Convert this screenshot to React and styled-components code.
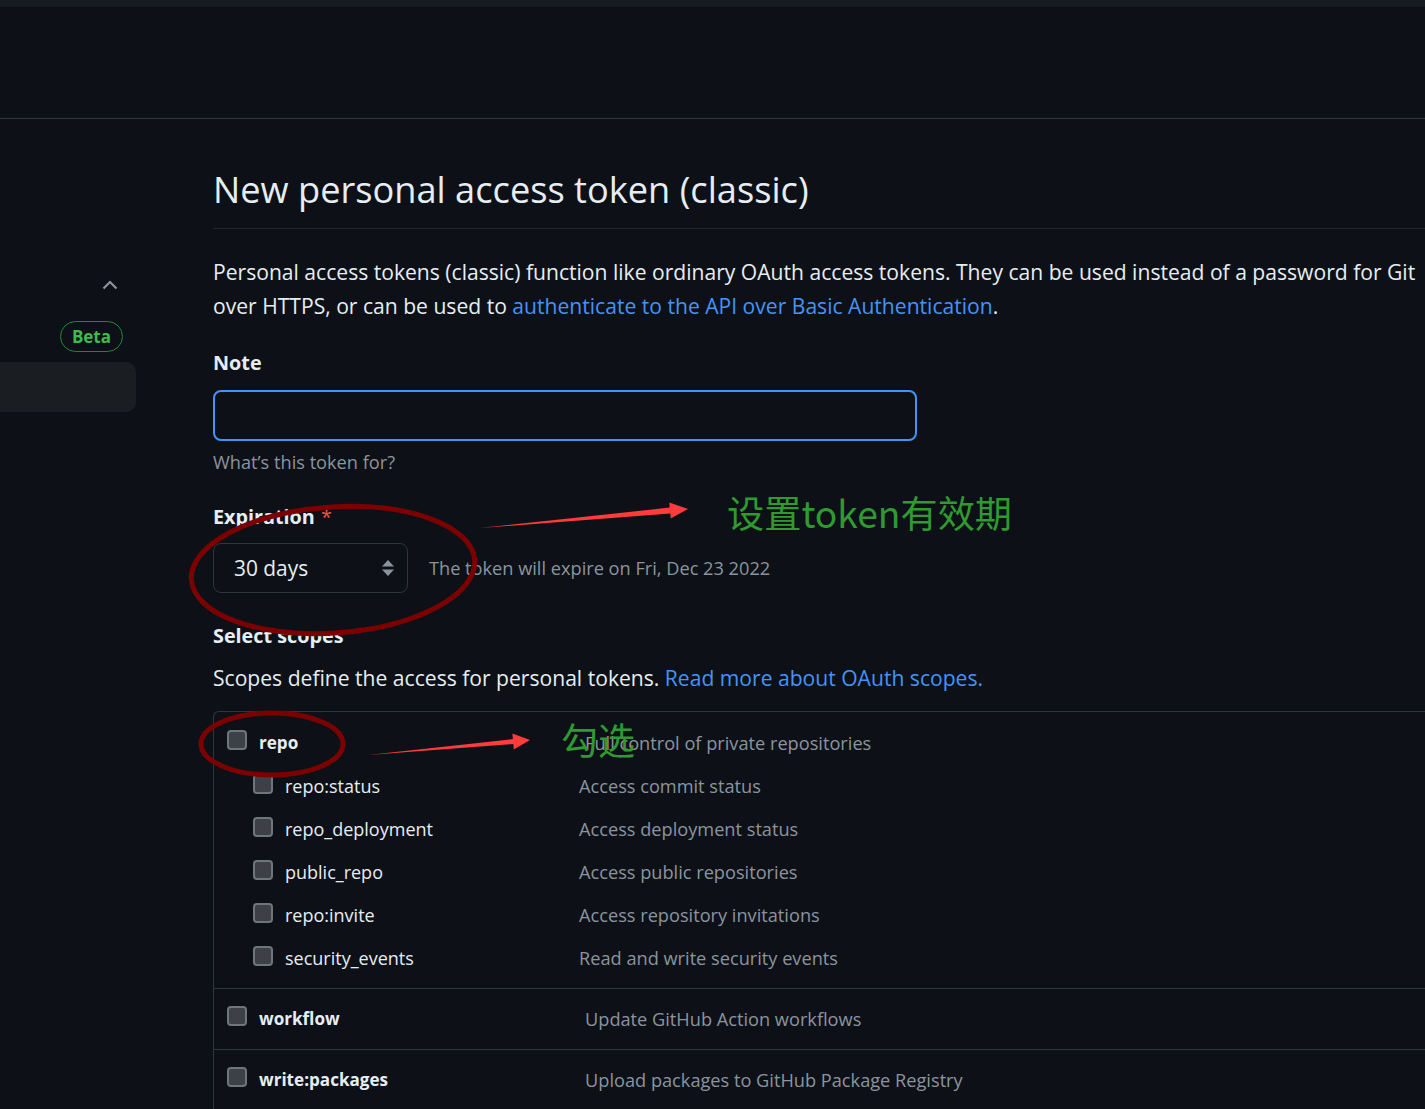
import React from 'react'
import styled, { createGlobalStyle } from 'styled-components'

const GlobalStyle = createGlobalStyle`
  html, body {
    margin: 0;
    padding: 0;
    background: #0d1117;
    overflow: hidden;
  }
  body {
    font-family: "Open Sans", "Noto Sans", "Noto Sans CJK SC", sans-serif;
    color: #e6edf3;
  }
`

const Page = styled.div`
  position: relative;
  width: 1425px;
  height: 1109px;
  overflow: hidden;
  background: #0d1117;
`

const TopStrip = styled.div`
  height: 7px;
  background: #161b22;
`

const HeaderBand = styled.div`
  height: 111px;
  border-bottom: 1px solid #30363d;
`

const Layout = styled.div`
  display: grid;
  grid-template-columns: 136px 1300px;
  column-gap: 77px;
`

const Sidebar = styled.aside`
  display: flex;
  flex-direction: column;
  align-items: flex-end;
  padding-top: 160px;
`

const Chevron = styled.svg`
  margin-right: 18px;
  width: 16px;
  height: 12px;
`

const BetaBadge = styled.span`
  margin-top: 30px;
  margin-right: 13px;
  box-sizing: border-box;
  height: 31px;
  padding: 0 11px;
  border: 1px solid #238636;
  border-radius: 16px;
  color: #3fb950;
  font-size: 17px;
  font-weight: 700;
  line-height: 29px;
`

const NavItem = styled.div`
  margin-top: 10px;
  width: 136px;
  height: 50px;
  background: #1a1e23;
  border-radius: 0 10px 10px 0;
`

const Content = styled.main`
  padding-top: 43px;
`

const Title = styled.h1`
  margin: 0;
  padding-bottom: 12px;
  border-bottom: 1px solid #21262d;
  font-size: 36.2px;
  font-weight: 400;
  line-height: 54px;
  color: #e6edf3;
`

const Lead = styled.p`
  margin: 26px 0 0;
  font-size: 21.1px;
  line-height: 34px;
  color: #e6edf3;
  white-space: nowrap;
`

const Link = styled.a`
  color: #4493f8;
  text-decoration: none;
`

const Label = styled.div`
  margin-top: ${(p) => p.$top}px;
  font-size: 19.8px;
  font-weight: 700;
  line-height: 30px;
  color: #e6edf3;
`

const Required = styled.span`
  color: #f85149;
  font-weight: 400;
  margin-left: 6px;
`

const NoteInput = styled.input`
  display: block;
  box-sizing: border-box;
  margin-top: 12px;
  width: 704px;
  height: 51px;
  background: #0d1117;
  border: 2px solid #4493f8;
  border-radius: 8px;
  outline: none;
`

const Hint = styled.div`
  margin-top: 8px;
  font-size: 18.2px;
  line-height: 26px;
  color: #8b949e;
`

const ExpiryRow = styled.div`
  display: flex;
  align-items: center;
  gap: 21px;
  margin-top: 11px;
`

const SelectBox = styled.div`
  box-sizing: border-box;
  display: flex;
  align-items: center;
  justify-content: space-between;
  width: 195px;
  height: 50px;
  padding: 0 12px 0 20px;
  background: #0d1117;
  border: 1px solid #30363d;
  border-radius: 8px;
  font-size: 20.9px;
  color: #e6edf3;
`

const ExpiryNote = styled.span`
  font-size: 18.2px;
  color: #8b949e;
`

const Description = styled.p`
  margin: 12px 0 0;
  font-size: 21.1px;
  line-height: 30px;
  color: #e6edf3;
`

const ScopeTable = styled.div`
  margin-top: 18px;
  border-top: 1px solid #30363d;
  border-left: 1px solid #30363d;
  border-top-left-radius: 6px;
`

const ScopeGroup = styled.div`
  padding: ${(p) => (p.$first ? '9px' : '8px')} 0 9px;
  border-top: ${(p) => (p.$first ? 'none' : '1px solid #30363d')};
`

const ScopeRow = styled.div`
  display: flex;
  align-items: center;
  height: 43px;
  padding-left: ${(p) => (p.$sub ? 39 : 13)}px;
`

const Check = styled.span`
  flex: none;
  box-sizing: border-box;
  width: 20px;
  height: 20px;
  margin-top: ${(p) => (p.$sub ? -4 : -6)}px;
  background: #3d4046;
  border: 2px solid #70757c;
  border-radius: 4px;
`

const ScopeName = styled.span`
  flex: none;
  width: ${(p) => p.$width}px;
  margin-left: 12px;
  font-size: ${(p) => (p.$bold ? 17.1 : 18)}px;
  font-weight: ${(p) => (p.$bold ? 700 : 400)};
  color: #e6edf3;
`

const ScopeDesc = styled.span`
  font-size: 18.2px;
  color: #8b949e;
`

const Overlay = styled.svg`
  position: absolute;
  left: 0;
  top: 0;
  pointer-events: none;
`

const Callout = styled.span`
  position: absolute;
  left: ${(p) => p.$x}px;
  top: ${(p) => p.$y}px;
  font-family: "Noto Sans CJK SC", "Noto Sans", sans-serif;
  font-size: ${(p) => p.$size}px;
  line-height: 1;
  color: #2f9a30;
  white-space: nowrap;
`

const scopes = [
  {
    name: 'repo',
    desc: 'Full control of private repositories',
    children: [
      ['repo:status', 'Access commit status'],
      ['repo_deployment', 'Access deployment status'],
      ['public_repo', 'Access public repositories'],
      ['repo:invite', 'Access repository invitations'],
      ['security_events', 'Read and write security events'],
    ],
  },
  { name: 'workflow', desc: 'Update GitHub Action workflows', children: [] },
  { name: 'write:packages', desc: 'Upload packages to GitHub Package Registry', children: [] },
]

const App = () => {
  return (
    <Page>
      <GlobalStyle />
      <TopStrip />
      <HeaderBand />
      <Layout>
        <Sidebar>
          <Chevron viewBox="0 0 16 12">
            <path d="M1.5 9.5 L8 3 L14.5 9.5" fill="none" stroke="#8b949e" strokeWidth="2.2" />
          </Chevron>
          <BetaBadge>Beta</BetaBadge>
          <NavItem />
        </Sidebar>

        <Content>
          <Title>New personal access token (classic)</Title>
          <Lead>
            Personal access tokens (classic) function like ordinary OAuth access tokens. They can be used instead of a password for Git
            <br />
            over HTTPS, or can be used to <Link href="#">authenticate to the API over Basic Authentication</Link>.
          </Lead>

          <Label $top={25}>Note</Label>
          <NoteInput type="text" />
          <Hint>What’s this token for?</Hint>

          <Label $top={27}>
            Expiration<Required>*</Required>
          </Label>
          <ExpiryRow>
            <SelectBox>
              <span>30 days</span>
              <svg width="14" height="20" viewBox="0 0 14 20">
                <path d="M7 2 L13 8.5 H1 Z" fill="#8b949e" />
                <path d="M7 18 L13 11.5 H1 Z" fill="#8b949e" />
              </svg>
            </SelectBox>
            <ExpiryNote>The token will expire on Fri, Dec 23 2022</ExpiryNote>
          </ExpiryRow>

          <Label $top={28}>Select scopes</Label>
          <Description>
            Scopes define the access for personal tokens. <Link href="#">Read more about OAuth scopes.</Link>
          </Description>

          <ScopeTable>
            {scopes.map((scope, i) => (
              <ScopeGroup key={scope.name} $first={i === 0}>
                <ScopeRow>
                  <Check />
                  <ScopeName $bold $width={326}>{scope.name}</ScopeName>
                  <ScopeDesc>{scope.desc}</ScopeDesc>
                </ScopeRow>
                {scope.children.map(([name, desc]) => (
                  <ScopeRow key={name} $sub>
                    <Check $sub />
                    <ScopeName $width={294}>{name}</ScopeName>
                    <ScopeDesc>{desc}</ScopeDesc>
                  </ScopeRow>
                ))}
              </ScopeGroup>
            ))}
          </ScopeTable>
        </Content>
      </Layout>

      {/* screenshot annotations */}
      <Overlay width="1425" height="1109" viewBox="0 0 1425 1109">
        <ellipse cx="333" cy="570" rx="142" ry="63" transform="rotate(-4 333 570)" fill="none" stroke="#7d0000" strokeWidth="5" />
        <ellipse cx="272" cy="744" rx="71" ry="31" fill="none" stroke="#7d0000" strokeWidth="5" />
        <polygon points="480,528 669.7,507.6 669.3,502.6 688,509 670.7,518.6 670.3,513.6" fill="#ff3b3b" />
        <polygon points="368,755 512.9,739.1 512.4,733.6 530,740 513.8,749.6 513.3,744.1" fill="#ff3b3b" />
      </Overlay>
      <Callout $x={727} $y={494} $size={37.2}>设置token有效期</Callout>
      <Callout $x={561} $y={721} $size={37}>勾选</Callout>
    </Page>
  )
}

export default App
